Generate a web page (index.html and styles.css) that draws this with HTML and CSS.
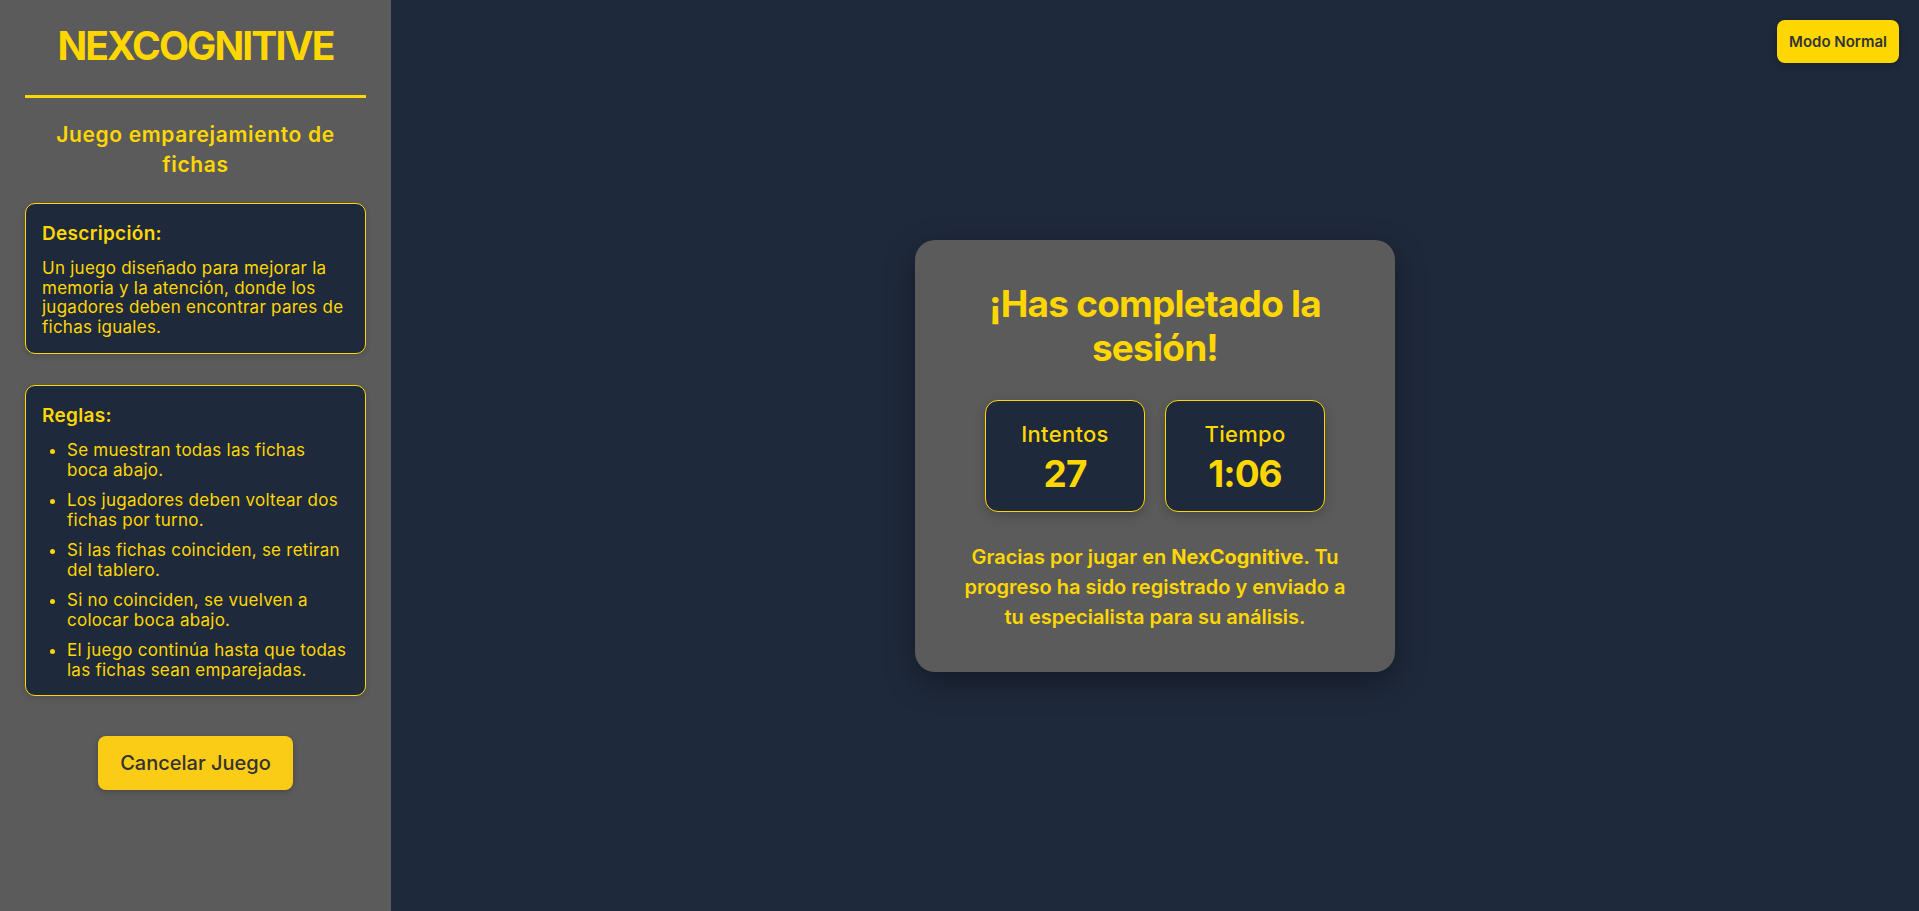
FILE: index.html
```html
<!DOCTYPE html>
<html lang="es">
<head>
<meta charset="utf-8">
<title>NexCognitive</title>
<link rel="stylesheet" href="styles.css">
</head>
<body>
<div class="app">
  <aside class="sidebar">
    <div class="brand">
      <h1 class="brand-title">NEXCOGNITIVE</h1>
    </div>
    <h2 class="game-title">Juego emparejamiento de fichas</h2>
    <section class="info-box">
      <h3 class="info-heading">Descripción:</h3>
      <p class="info-text">Un juego diseñado para mejorar la memoria y la atención, donde los jugadores deben encontrar pares de fichas iguales.</p>
    </section>
    <section class="info-box rules">
      <h3 class="info-heading">Reglas:</h3>
      <ul class="rules-list">
        <li>Se muestran todas las fichas boca abajo.</li>
        <li>Los jugadores deben voltear dos fichas por turno.</li>
        <li>Si las fichas coinciden, se retiran del tablero.</li>
        <li>Si no coinciden, se vuelven a colocar boca abajo.</li>
        <li>El juego continúa hasta que todas las fichas sean emparejadas.</li>
      </ul>
    </section>
    <div class="cancel-wrap">
      <button class="cancel-btn">Cancelar Juego</button>
    </div>
  </aside>
  <main class="main">
    <div class="topbar">
      <button class="mode-btn">Modo Normal</button>
    </div>
    <div class="stage">
      <div class="result-card">
        <h2 class="result-title">¡Has completado la sesión!</h2>
        <div class="stats">
          <div class="stat">
            <div class="stat-label">Intentos</div>
            <div class="stat-value">27</div>
          </div>
          <div class="stat">
            <div class="stat-label">Tiempo</div>
            <div class="stat-value">1:06</div>
          </div>
        </div>
        <p class="result-text">Gracias por jugar en <strong>NexCognitive</strong>. Tu progreso ha sido registrado y enviado a tu especialista para su análisis.</p>
      </div>
    </div>
  </main>
</div>
</body>
</html>
```
FILE: styles.css
```css
* { box-sizing: border-box; }
html, body { margin: 0; padding: 0; height: 100%; }
body {
  font-family: Inter, "Noto Sans", "Liberation Sans", sans-serif;
  background: #1e293b;
  color: #ffd700;
}
.app {
  display: flex;
  height: 911px;
}
.sidebar {
  width: 391px;
  flex: 0 0 391px;
  background: #5b5b5b;
  padding: 22px 25px 20px;
  display: flex;
  flex-direction: column;
}
.brand {
  border-bottom: 3px solid #ffd700;
  padding-bottom: 25px;
}
.brand-title {
  margin: 0;
  font-size: 39px;
  line-height: 48px;
  font-weight: 700;
  letter-spacing: -1.9px;
  text-align: center;
  color: #ffd700;
}
.game-title {
  margin: 22px 0 0;
  font-size: 21px;
  line-height: 30px;
  font-weight: 600;
  letter-spacing: 0.65px;
  text-align: center;
  color: #ffd700;
}
.info-box {
  margin-top: 23px;
  background: #1e293b;
  border: 1px solid #ffd700;
  border-radius: 10px;
  padding: 16px 16px 15px;
  box-shadow: 0 2px 6px rgba(0,0,0,0.15);
}
.info-box.rules { margin-top: 31px; }
.info-heading {
  margin: 0 0 11px;
  font-size: 19px;
  line-height: 28px;
  font-weight: 600;
  letter-spacing: 0.3px;
}
.info-text {
  margin: 0;
  font-size: 17px;
  line-height: 19.7px;
  letter-spacing: 0.25px;
}
.rules-list {
  margin: 0;
  padding-left: 25px;
  font-size: 17px;
  line-height: 19.7px;
  letter-spacing: 0.25px;
}
.rules-list li { margin-bottom: 10.6px; }
.rules-list li:last-child { margin-bottom: 0; }
.cancel-wrap {
  display: flex;
  justify-content: center;
  margin-top: 40px;
}
.cancel-btn {
  font-family: inherit;
  font-size: 20px;
  line-height: 30px;
  font-weight: 500;
  color: #333;
  background: #facc15;
  border: none;
  border-radius: 8px;
  padding: 12px 22px;
  box-shadow: 0 2px 6px rgba(0,0,0,0.2);
}
.main {
  flex: 1;
  position: relative;
  display: flex;
  flex-direction: column;
}
.topbar {
  position: absolute;
  top: 20px;
  right: 20px;
}
.mode-btn {
  font-family: inherit;
  font-size: 15px;
  line-height: 23px;
  font-weight: 600;
  color: #333;
  background: #ffd700;
  border: none;
  border-radius: 8px;
  padding: 10px 12px;
  box-shadow: 0 2px 6px rgba(0,0,0,0.25);
}
.stage {
  flex: 1;
  display: flex;
  align-items: center;
  justify-content: center;
}
.result-card {
  width: 480px;
  background: #5b5b5b;
  border-radius: 20px;
  padding: 40px;
  text-align: center;
  box-shadow: 0 10px 30px rgba(0,0,0,0.35);
}
.result-title {
  margin: 2px 0 0;
  font-size: 37px;
  line-height: 44px;
  font-weight: 700;
  letter-spacing: -0.8px;
}
.stats {
  display: flex;
  justify-content: center;
  gap: 20px;
  margin-top: 30px;
}
.stat {
  width: 160px;
  height: 112px;
  background: #1e293b;
  border: 1px solid #ffd700;
  border-radius: 13px;
  padding: 17px 10px;
  box-shadow: 0 4px 12px rgba(0,0,0,0.2);
}
.stat-label {
  font-size: 22px;
  line-height: 32px;
  font-weight: 500;
  letter-spacing: 0.3px;
}
.stat-value {
  margin-top: 4px;
  font-size: 37px;
  line-height: 40px;
  font-weight: 700;
  letter-spacing: -1px;
}
.result-text {
  margin: 30px 0 0;
  font-size: 20px;
  line-height: 30px;
  font-weight: 600;
}
.result-text strong { font-weight: 700; }
```
